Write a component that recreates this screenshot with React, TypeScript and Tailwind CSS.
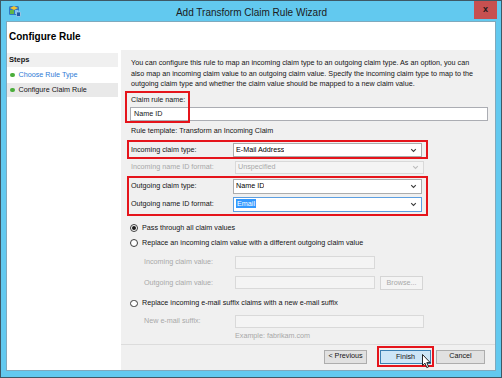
import React from 'react';

const FONT = "font-['Liberation_Sans',Arial,sans-serif]";

const Chevron = ({ disabled }: { disabled?: boolean }) => (
  <svg width="7" height="5" viewBox="0 0 7 5" className="shrink-0">
    <path d="M1.2 1.2 L3.5 3.4 L5.8 1.2" fill="none" stroke={disabled ? '#bdbdbd' : '#3a3a3a'} strokeWidth="1.1" />
  </svg>
);

type SelectProps = {
  value: React.ReactNode;
  disabled?: boolean;
  focused?: boolean;
  className?: string;
};

// combo box drawn like a Win8 dropdown list
const Select = ({ value, disabled, focused, className = 'h-[14px]' }: SelectProps) => (
  <div
    className={
      'w-[189px] flex items-center justify-between pl-[2px] pr-[4px] border ' +
      className +
      (disabled
        ? ' bg-[#f4f4f4] border-[#d9d9d9] text-[#a8a8a8]'
        : focused
          ? ' bg-white border-[#5d9fe0] text-black'
          : ' bg-white border-[#acacac] text-black')
    }
  >
    <span className="truncate">{value}</span>
    <Chevron disabled={disabled} />
  </div>
);

const Radio = ({ checked }: { checked?: boolean }) => (
  <span className="w-[7.5px] h-[7.5px] rounded-full border border-[#3c3c3c] bg-white flex items-center justify-center shrink-0">
    {checked && <span className="w-[3.5px] h-[3.5px] rounded-full bg-[#1a1a1a]" />}
  </span>
);

const DisabledInput = ({ className = 'w-[140px]' }: { className?: string }) => (
  <div className={'h-[13px] border border-[#d9d9d9] bg-[#f4f4f4] ' + className} />
);

const Cursor = () => (
  <svg width="10" height="15" viewBox="0 0 10 15" className="absolute left-[421px] top-[353px]">
    <path d="M0.5 0.5 L0.5 11.5 L3 9.2 L4.8 13.6 L6.6 12.8 L4.8 8.6 L8.2 8.6 Z" fill="#fff" stroke="#111" strokeWidth="0.9" strokeLinejoin="round" />
  </svg>
);

const AppIcon = () => (
  <svg width="13" height="13" viewBox="0 0 13 13" className="shrink-0">
    <rect x="1" y="2" width="10" height="9" rx="1.5" fill="#2f78c4" />
    <path d="M2 4 L6 2 L10 4 L6 6 Z" fill="#f4c430" />
    <rect x="2" y="6" width="4" height="4" fill="#5fb548" />
    <rect x="7" y="6" width="3.5" height="4" fill="#7fc3f0" />
    <rect x="8.5" y="8" width="4" height="4.5" rx="0.8" fill="#1d5fa8" stroke="#cfe6f7" strokeWidth="0.6" />
  </svg>
);

export default function App() {
  return (
    <div className={'relative w-[502px] h-[378px] bg-[#62c9ef] border border-[#3e5866] flex flex-col overflow-hidden text-[7.2px] text-[#141414] ' + FONT}>
      {/* Title bar */}
      <div className="h-[20px] flex items-center shrink-0">
        <div className="ml-[7px] -mt-[1px]">
          <AppIcon />
        </div>
        <div className="flex-1 text-center pl-[8px] pt-[3px] text-[10px] text-[#1b1b1b] leading-none">Add Transform Claim Rule Wizard</div>
        <div className="self-start -mt-[1px] mr-[4px] w-[23px] h-[19px] bg-[#c75050] flex items-center justify-center">
          <span className="text-[9px] font-bold text-[#1a1a1a] leading-none">x</span>
        </div>
      </div>

      {/* Client area */}
      <div className="flex-1 mx-[5px] mb-[6px] border border-[#7fa9bd] flex flex-col bg-white">
        <div className="h-[28px] flex items-center pl-[2px] shrink-0">
          <span className="text-[10px] font-bold text-black">Configure Rule</span>
        </div>

        <div className="flex-1 flex">
          {/* Steps */}
          <div className="w-[114px] bg-white pt-[3px] pr-[3px] flex flex-col gap-[1px]">
            <div className="h-[14px] bg-[#f0f0f0] flex items-center pl-[2px] text-[7.5px] font-bold">Steps</div>
            <div className="h-[14px] flex items-center pl-[3px]">
              <span className="w-[4.5px] h-[4.5px] rounded-full bg-[#4cae3c] mr-[4px]" />
              <span className="text-[#2e7bd6]">Choose Rule Type</span>
            </div>
            <div className="h-[14px] flex items-center pl-[3px] bg-[#e9e9e9]">
              <span className="w-[4.5px] h-[4.5px] rounded-full bg-[#4cae3c] mr-[4px]" />
              <span>Configure Claim Rule</span>
            </div>
          </div>

          {/* Rule form */}
          <div className="flex-1 bg-[#f0f0f0] flex flex-col relative">
            <div className="pl-[9px] pt-[8px] flex flex-col">
              <p className="pl-[1px] leading-[10.5px] whitespace-nowrap">
                You can configure this rule to map an incoming claim type to an outgoing claim type. As an option, you can
                <br />
                also map an incoming claim value to an outgoing claim value. Specify the incoming claim type to map to the
                <br />
                outgoing claim type and whether the claim value should be mapped to a new claim value.
              </p>

              <div className="mt-[4px] pl-[1px] leading-[11px]">Claim rule name:</div>
              <div className="mt-[2.5px] h-[14px] w-[358px] border border-[#abadb3] bg-white flex items-center pl-[3px]">Name ID</div>

              <div className="mt-[3.5px] pl-[1px] leading-[11px]">Rule template: Transform an Incoming Claim</div>

              <div className="mt-[4.5px] -ml-[3px] w-[301px] border-2 border-[#e5141b] pt-[1px] flex items-center">
                <span className="w-[104px] pl-[2px]">Incoming claim type:</span>
                <Select value="E-Mail Address" />
              </div>

              <div className="mt-[2px] h-[13px] flex items-center">
                <span className="w-[105px] pl-[1px] text-[#a8a8a8]">Incoming name ID format:</span>
                <Select value="Unspecified" disabled className="h-[13px]" />
              </div>

              <div className="mt-[2px] -ml-[3px] w-[301px] border-2 border-[#e5141b] pt-[1px] pb-[2px] flex flex-col gap-[3px]">
                <div className="flex items-center">
                  <span className="w-[104px] pl-[2px]">Outgoing claim type:</span>
                  <Select value="Name ID" className="h-[15px]" />
                </div>
                <div className="flex items-center">
                  <span className="w-[104px] pl-[2px]">Outgoing name ID format:</span>
                  <Select
                    value={<span className="bg-[#3399ff] text-white px-[1px]">Email</span>}
                    focused
                    className="h-[15px]"
                  />
                </div>
              </div>

              <div className="mt-[6.5px] h-[11px] flex items-center gap-[4.5px]">
                <Radio checked />
                <span>Pass through all claim values</span>
              </div>
              <div className="mt-[4px] h-[11px] flex items-center gap-[4.5px]">
                <Radio />
                <span>Replace an incoming claim value with a different outgoing claim value</span>
              </div>

              <div className="mt-[7.5px] h-[13px] flex items-center text-[#a8a8a8]">
                <span className="w-[105px] pl-[14px]">Incoming claim value:</span>
                <DisabledInput />
              </div>
              <div className="mt-[7px] h-[14px] flex items-start text-[#a8a8a8]">
                <span className="w-[105px] pl-[14px] leading-[13px]">Outgoing claim value:</span>
                <DisabledInput />
                <div className="ml-[5px] w-[43px] h-[14px] border border-[#d5d5d5] bg-[#f4f4f4] flex items-center justify-center">Browse...</div>
              </div>

              <div className="mt-[8px] h-[11px] flex items-center gap-[4.5px]">
                <Radio />
                <span>Replace incoming e-mail suffix claims with a new e-mail suffix</span>
              </div>
              <div className="mt-[6px] h-[13px] flex items-center text-[#a8a8a8]">
                <span className="w-[105px] pl-[14px]">New e-mail suffix:</span>
                <DisabledInput className="w-[189px]" />
              </div>
              <div className="mt-[3px] pl-[105px] leading-[10px] text-[#a8a8a8]">Example: fabrikam.com</div>
            </div>

            <div className="flex-1" />

            <div className="border-t border-[#dcdcdc] pt-[1px] pb-[3px] pr-[10px] flex items-center justify-end">
              <div className="w-[43px] h-[14px] border border-[#adadad] bg-[#e1e1e1] flex items-center justify-center">&lt; Previous</div>
              <div className="ml-[10px] border-2 border-[#e5141b] px-[1px] pt-[2px] pb-[1px]">
                <div className="w-[51px] h-[14px] border border-[#3c7fb1] bg-[#cde6f7] flex items-center justify-center">Finish</div>
              </div>
              <div className="ml-[2px] w-[49px] h-[14px] border border-[#adadad] bg-[#e1e1e1] flex items-center justify-center">Cancel</div>
            </div>

            {/* annotation around claim rule name */}
            <div className="absolute left-[4px] top-[41px] w-[65px] h-[32px] border-2 border-[#e5141b] pointer-events-none" />
          </div>
        </div>
      </div>

      <Cursor />
    </div>
  );
}
